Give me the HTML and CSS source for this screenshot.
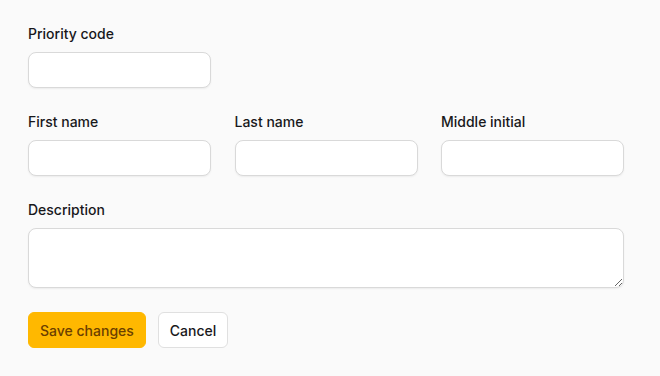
FILE: index.html
```html
<!DOCTYPE html>
<html lang="en">
<head>
    <meta charset="UTF-8">
    <meta name="viewport" content="width=device-width, initial-scale=1.0">
    <title>Edit record</title>
    <link rel="stylesheet" href="styles.css">
</head>
<body>
    <form class="form">
        <div class="row">
            <div class="field">
                <label for="priority">Priority code</label>
                <input type="text" id="priority">
            </div>
        </div>

        <div class="row">
            <div class="field">
                <label for="first">First name</label>
                <input type="text" id="first">
            </div>
            <div class="field">
                <label for="last">Last name</label>
                <input type="text" id="last">
            </div>
            <div class="field">
                <label for="middle">Middle initial</label>
                <input type="text" id="middle">
            </div>
        </div>

        <div class="field wide">
            <label for="desc">Description</label>
            <textarea id="desc"></textarea>
        </div>

        <div class="actions">
            <button type="submit" class="btn primary">Save changes</button>
            <button type="button" class="btn">Cancel</button>
        </div>
    </form>
</body>
</html>
```

FILE: styles.css
```css
* {
    margin: 0;
    padding: 0;
    box-sizing: border-box;
    font-family: Inter, 'Noto Sans', sans-serif;
}
body {
    background: #fafafa;
    color: #18181b;
    padding: 24px 28px;
}
.form {
    width: 596px;
    display: flex;
    flex-direction: column;
    gap: 24px;
}
.row {
    display: grid;
    grid-template-columns: repeat(3, 1fr);
    column-gap: 23.5px;
}
.field {
    display: flex;
    flex-direction: column;
    gap: 8px;
}
label {
    font-size: 14px;
    line-height: 20px;
    font-weight: 500;
}
input,
textarea {
    height: 36px;
    width: 100%;
    border: 1px solid #d9d9d9;
    border-radius: 8px;
    background: #fff;
    box-shadow: 0 1px 2px rgba(0, 0, 0, 0.06);
    font-size: 14px;
    padding: 8px 12px;
}
textarea {
    height: 60px;
    resize: both;
}
.actions {
    display: flex;
    gap: 12px;
}
.btn {
    height: 36px;
    padding: 0 11px;
    font-size: 14px;
    font-weight: 500;
    border: 1px solid #e0e0e0;
    border-radius: 6px;
    background: #fff;
    color: #18181b;
    cursor: pointer;
}
.btn.primary {
    background: #ffb800;
    border-color: #ffb800;
    color: #6b3f00;
}
```
